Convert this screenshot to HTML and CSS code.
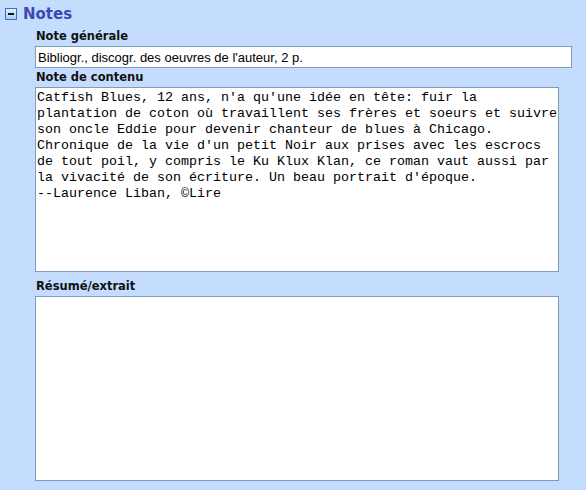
FILE: index.html
```html
<!DOCTYPE html>
<html>
<head>
<meta charset="utf-8">
<link rel="stylesheet" href="styles.css">
</head>
<body>
<div class="panel">
  <div class="head">
    <span class="toggle"><span class="minus"></span></span>
    <span class="title">Notes</span>
  </div>
  <div class="fields">
    <div class="lbl">Note générale</div>
    <input class="txt" type="text" value="Bibliogr., discogr. des oeuvres de l'auteur, 2 p.">
    <div class="lbl">Note de contenu</div>
    <textarea class="area" wrap="off">Catfish Blues, 12 ans, n'a qu'une idée en tête: fuir la
plantation de coton où travaillent ses frères et soeurs et suivre
son oncle Eddie pour devenir chanteur de blues à Chicago.
Chronique de la vie d'un petit Noir aux prises avec les escrocs
de tout poil, y compris le Ku Klux Klan, ce roman vaut aussi par
la vivacité de son écriture. Un beau portrait d'époque.
--Laurence Liban, ©Lire</textarea>
    <div class="lbl lbl-gap">Résumé/extrait</div>
    <textarea class="area" wrap="off"></textarea>
  </div>
</div>
</body>
</html>
```
FILE: styles.css
```css
html, body {
  margin: 0;
  padding: 0;
  background: #c4ddfe;
  height: 100%;
}
.panel {
  padding: 0;
}
.head {
  display: flex;
  align-items: center;
  height: 27px;
  padding-left: 5px;
}
.toggle {
  box-sizing: border-box;
  width: 12px;
  height: 12px;
  border: 1px solid #3a72c8;
  background: linear-gradient(#e4efff, #a9cbf6);
  display: flex;
  align-items: center;
  justify-content: center;
  margin-top: 1px;
}
.minus {
  width: 6px;
  height: 2px;
  background: #111;
}
.title {
  margin-left: 6px;
  font-family: "DejaVu Sans", Verdana, sans-serif;
  font-weight: bold;
  font-size: 15px;
  color: #3d47b6;
}
.fields {
  margin-left: 35px;
  display: flex;
  flex-direction: column;
  align-items: flex-start;
}
.lbl {
  font-family: "DejaVu Sans", Verdana, sans-serif;
  font-weight: bold;
  font-size: 11.5px;
  line-height: 19px;
  color: #111;
  padding-left: 1px;
}
.lbl-gap {
  margin-top: 4px;
  line-height: 20px;
}
.txt {
  box-sizing: border-box;
  width: 537px;
  height: 22px;
  margin: 0;
  border: 1px solid #7f9db9;
  background: #fff;
  padding: 0 2px;
  font-family: "Liberation Sans", Arial, sans-serif;
  font-size: 13px;
  color: #000;
  outline: none;
}
.area {
  display: block;
  box-sizing: border-box;
  width: 524px;
  height: 185px;
  margin: 0;
  border: 1px solid #7f9db9;
  background: #fff;
  padding: 2px 0 0 1px;
  font-family: "Liberation Mono", "Courier New", monospace;
  font-size: 13.33px;
  line-height: 16px;
  color: #000;
  resize: none;
  overflow: hidden;
  outline: none;
}
```
